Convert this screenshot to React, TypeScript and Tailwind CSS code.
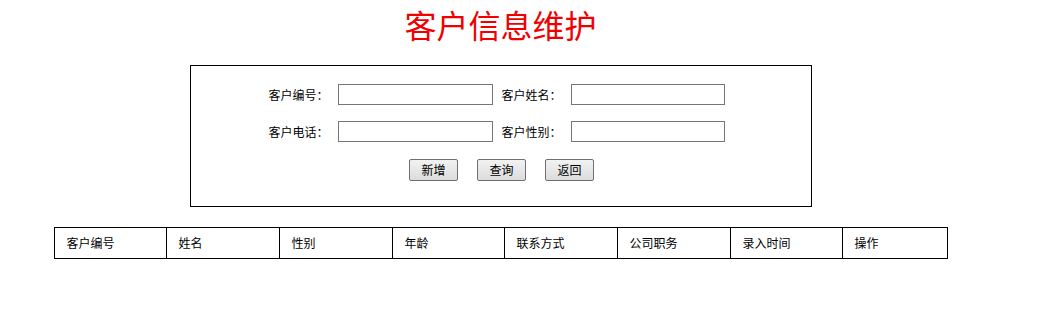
import React from "react";

const font = { fontFamily: '"Noto Sans CJK SC", "Noto Sans", sans-serif' };

function Field({ label, inputW }: { label: string; inputW: string }) {
  return (
    <div className="flex items-center">
      <span className="w-[69px] text-[12px] leading-[14px] text-black">{label}</span>
      <input
        type="text"
        className={`${inputW} h-[21px] border border-[#767676] bg-white outline-none`}
      />
    </div>
  );
}

function Btn({ children }: { children: React.ReactNode }) {
  return (
    <button
      type="button"
      className="w-[49px] h-[22px] border border-[#707070] bg-gradient-to-b from-[#f2f2f2] to-[#dcdcdc] text-[12px] leading-[14px] text-black rounded-[2px]"
    >
      {children}
    </button>
  );
}

export default function App() {
  const cols = [
    { t: "客户编号", w: "w-[112px]" },
    { t: "姓名", w: "w-[113px]" },
    { t: "性别", w: "w-[113px]" },
    { t: "年龄", w: "w-[112px]" },
    { t: "联系方式", w: "w-[113px]" },
    { t: "公司职务", w: "w-[113px]" },
    { t: "录入时间", w: "w-[112px]" },
    { t: "操作", w: "w-[105px]" },
  ];
  return (
    <div className="w-[1001px] bg-white" style={font}>
      <div className="h-[48px] text-center text-[32px] leading-[48px] text-[#f00000]">
        客户信息维护
      </div>
      <div className="mx-auto mt-[17px] w-[622px] h-[142px] border border-black pt-[18px]">
        <div className="flex flex-col gap-[16px] pl-[78px]">
          <div className="flex gap-[9px]">
            <Field label="客户编号：" inputW="w-[155px]" />
            <Field label="客户姓名：" inputW="w-[154px]" />
          </div>
          <div className="flex gap-[9px]">
            <Field label="客户电话：" inputW="w-[155px]" />
            <Field label="客户性别：" inputW="w-[154px]" />
          </div>
        </div>
        <div className="mt-[17px] flex justify-center gap-[19px] pl-[2px]">
          <Btn>新增</Btn>
          <Btn>查询</Btn>
          <Btn>返回</Btn>
        </div>
      </div>
      <table className="mx-auto mt-[20px] border-collapse">
        <tbody>
          <tr className="h-[31px]">
            {cols.map((c) => (
              <td
                key={c.t}
                className={`${c.w} border border-black pl-[12px] text-left text-[12px] leading-[14px] text-black`}
              >
                {c.t}
              </td>
            ))}
          </tr>
        </tbody>
      </table>
    </div>
  );
}
